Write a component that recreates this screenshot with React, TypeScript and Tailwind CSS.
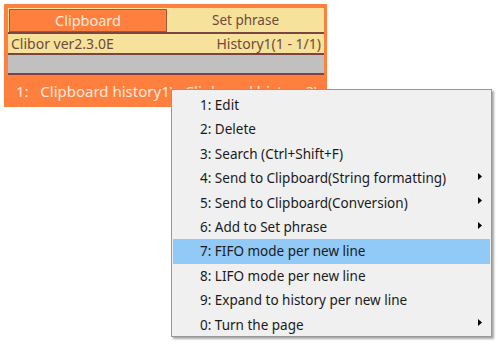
import React from 'react';

const menuItems = [
  { label: '1: Edit' },
  { label: '2: Delete' },
  { label: '3: Search (Ctrl+Shift+F)' },
  { label: '4: Send to Clipboard(String formatting)', sub: true },
  { label: '5: Send to Clipboard(Conversion)', sub: true },
  { label: '6: Add to Set phrase', sub: true },
  { label: '7: FIFO mode per new line', active: true },
  { label: '8: LIFO mode per new line' },
  { label: '9: Expand to history per new line' },
  { label: '0: Turn the page', sub: true },
];

const SubArrow: React.FC = () => (
  <svg width="4" height="7" viewBox="0 0 4 7" className="mb-[4px]">
    <path d="M0 0 L4 3.5 L0 7 Z" fill="#000" />
  </svg>
);

const App: React.FC = () => {
  return (
    <div
      className="relative w-[500px] h-[346px] bg-white overflow-hidden"
      style={{ fontFamily: '"Noto Sans", "Open Sans", sans-serif' }}
    >
      {/* Clibor window */}
      <div className="ml-[4px] mt-[4px] w-[323px] h-[103px] bg-[#ff7f3f] pl-[4px] pr-[3px] pt-[4px] flex flex-col">
        {/* Tabs */}
        <div className="flex h-[24px] bg-[#f6e29b]">
          <div className="w-[158px] bg-[#ff7f3f] border border-[#a05a3c] flex items-center justify-center text-[14.5px] text-[#fde9da] ml-[1px] mt-[1px]">
            Clipboard
          </div>
          <div className="flex-1 flex items-center justify-center text-[13.5px] text-[#6e4a3c]">Set phrase</div>
        </div>
        <div className="h-[2px] bg-[#7a4543]" />
        {/* Status */}
        <div className="h-[19px] bg-[#f6e29b] flex items-center justify-between px-[3px] text-[14px] text-[#6e4a3c]">
          <span>Clibor ver2.3.0E</span>
          <span>History1(1 - 1/1)</span>
        </div>
        <div className="h-[2px] bg-[#7a4543]" />
        <div className="h-[18px] bg-[#c0c0c0]" />
        <div className="h-[2px] bg-[#7a4543]" />
        {/* List row */}
        <div className="flex-1 flex items-center pl-[8px] text-[15px] text-[#fde9da] whitespace-nowrap overflow-hidden">
          1:&nbsp;&nbsp;&nbsp;Clipboard history1\nClipboard history2\n
        </div>
      </div>

      {/* Context menu */}
      <div className="absolute left-[171px] top-[89px] w-[321px] h-[248px] bg-[#f0f0f0] border border-[#979797] shadow-[2px_2px_2px_rgba(0,0,0,0.35)] pt-[3px] px-[1px]">
        {menuItems.map((item) => (
          <div
            key={item.label}
            className={`h-[24.4px] flex items-center justify-between pl-[27px] pr-[8px] text-[13.5px] text-[#1a1a1a] whitespace-nowrap ${
              item.active ? 'bg-[#91c9f7]' : ''
            }`}
          >
            <span>{item.label}</span>
            {item.sub && <SubArrow />}
          </div>
        ))}
      </div>
    </div>
  );
};

export default App;
